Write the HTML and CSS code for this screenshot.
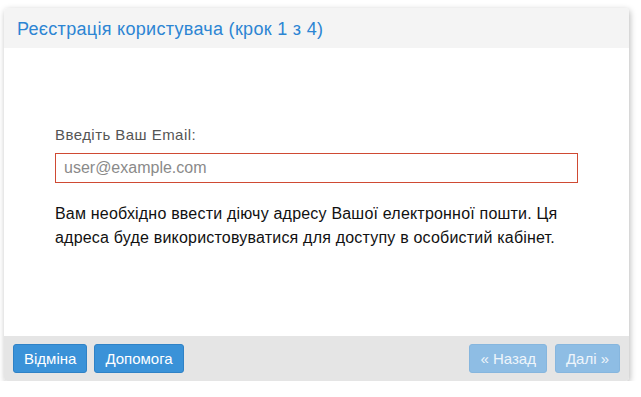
FILE: index.html
```html
<!DOCTYPE html>
<html lang="uk">
<head>
<meta charset="utf-8">
<title>Реєстрація користувача</title>
<link rel="stylesheet" href="styles.css">
</head>
<body>
<div class="panel">
  <div class="panel-head">Реєстрація користувача (крок 1 з 4)</div>
  <div class="panel-body">
    <label class="label" for="email">Введіть Ваш Email:</label>
    <input class="field" id="email" type="text" placeholder="user@example.com">
    <p class="hint">Вам необхідно ввести діючу адресу Вашої електронної пошти. Ця адреса буде використовуватися для доступу в особистий кабінет.</p>
  </div>
  <div class="panel-foot">
    <div class="group">
      <button class="btn">Відміна</button>
      <button class="btn">Допомога</button>
    </div>
    <div class="group">
      <button class="btn disabled">« Назад</button>
      <button class="btn disabled">Далі »</button>
    </div>
  </div>
</div>
</body>
</html>
```
FILE: styles.css
```css
html, body {
  margin: 0;
  padding: 0;
  background: #ffffff;
}
body {
  padding: 8px 12px 0 4px;
  font-family: "Liberation Sans", Arial, sans-serif;
}
.panel {
  width: 625px;
  height: 373px;
  border-radius: 4px;
  box-shadow: 1px 2px 6px rgba(0, 0, 0, 0.28);
  background: #ffffff;
  display: flex;
  flex-direction: column;
  overflow: hidden;
}
.panel-head {
  height: 40px;
  background: #f4f4f4;
  color: #2c85d3;
  font-size: 18px;
  letter-spacing: 0.3px;
  line-height: 43px;
  padding-left: 13px;
  box-sizing: border-box;
}
.panel-body {
  flex: 1;
  padding: 78px 51px 0 51px;
  display: flex;
  flex-direction: column;
}
.label {
  color: #555555;
  font-size: 15px;
  letter-spacing: 0.45px;
  line-height: 18px;
  margin-bottom: 9px;
}
.field {
  height: 30px;
  box-sizing: border-box;
  border: 1px solid #cf4a33;
  padding: 0 8px;
  font-family: "Liberation Sans", Arial, sans-serif;
  font-size: 16px;
  color: #333;
  outline: none;
  margin: 0;
}
.field::placeholder {
  color: #8a8a8a;
}
.hint {
  margin: 19px 0 0 0;
  font-size: 16px;
  letter-spacing: 0.2px;
  line-height: 24px;
  color: #111111;
}
.panel-foot {
  height: 45px;
  background: #e5e5e5;
  display: flex;
  justify-content: space-between;
  align-items: flex-start;
  padding: 8px 9px 0 9px;
  box-sizing: border-box;
}
.group {
  display: flex;
  gap: 7px;
}
.group + .group {
  gap: 8px;
}
.btn {
  height: 29px;
  padding: 0 10px;
  background: #3a92d8;
  border: 1px solid #2f82c6;
  border-radius: 3px;
  color: #ffffff;
  font-family: "Liberation Sans", Arial, sans-serif;
  font-size: 15px;
}
.btn.disabled {
  background: #8ebde4;
  border-color: #86b6de;
  color: #eef5fb;
}
```
